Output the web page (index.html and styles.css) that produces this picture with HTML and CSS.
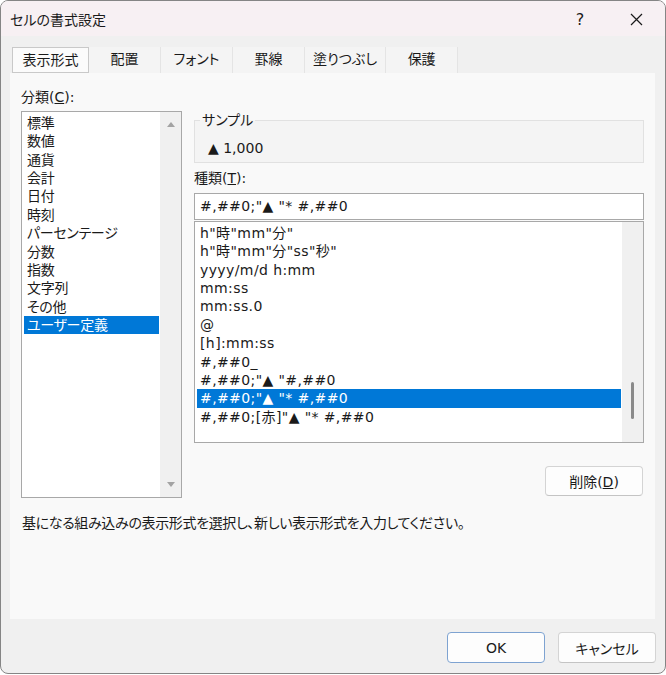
FILE: index.html
```html
<!DOCTYPE html>
<html lang="ja">
<head>
    <meta charset="UTF-8">
    <title>セルの書式設定</title>
    <link rel="stylesheet" href="styles.css">
</head>
<body>

<div class="dialog">
    <div class="titlebar">
        <span class="title">セルの書式設定</span>
        <span class="help">?</span>
        <span class="close">
            <svg width="13" height="13" viewBox="0 0 13 13"><path d="M1 1 L12 12 M12 1 L1 12" stroke="#1a1a1a" stroke-width="1.2" fill="none"/></svg>
        </span>
    </div>

    <div class="tabs">
        <div class="tab active">表示形式</div>
        <div class="tab">配置</div>
        <div class="tab">フォント</div>
        <div class="tab">罫線</div>
        <div class="tab">塗りつぶし</div>
        <div class="tab">保護</div>
    </div>

    <div class="panel">
        <div class="format-grid">
            <div class="label">分類(<u>C</u>):</div>

            <div class="listbox cat-list">
                <ul class="items">
                    <li>標準</li>
                    <li>数値</li>
                    <li>通貨</li>
                    <li>会計</li>
                    <li>日付</li>
                    <li>時刻</li>
                    <li>パーセンテージ</li>
                    <li>分数</li>
                    <li>指数</li>
                    <li>文字列</li>
                    <li>その他</li>
                    <li class="selected">ユーザー定義</li>
                </ul>
                <div class="vscroll arrows">
                    <svg width="8" height="5" viewBox="0 0 8 5"><polygon points="4,0 8,5 0,5" fill="#a3a3a3"/></svg>
                    <svg width="8" height="5" viewBox="0 0 8 5"><polygon points="0,0 8,0 4,5" fill="#a3a3a3"/></svg>
                </div>
            </div>

            <div class="right">
                <fieldset class="sample">
                    <legend>サンプル</legend>
                    <div class="sample-value">▲ 1,000</div>
                </fieldset>

                <div class="label type-label">種類(<u>T</u>):</div>
                <div class="textbox">#,##0;"▲ "* #,##0</div>

                <div class="listbox fmt-list">
                    <ul class="items">
                        <li>h"時"mm"分"</li>
                        <li>h"時"mm"分"ss"秒"</li>
                        <li>yyyy/m/d h:mm</li>
                        <li>mm:ss</li>
                        <li>mm:ss.0</li>
                        <li>@</li>
                        <li>[h]:mm:ss</li>
                        <li>#,##0_</li>
                        <li>#,##0;"▲ "#,##0</li>
                        <li class="selected">#,##0;"▲ "* #,##0</li>
                        <li>#,##0;[赤]"▲ "* #,##0</li>
                    </ul>
                    <div class="vscroll"><span class="thumb"></span></div>
                </div>

                <div class="actions">
                    <button class="btn small">削除(<u>D</u>)</button>
                </div>
            </div>
        </div>

        <p class="hint">基になる組み込みの表示形式を選択し、新しい表示形式を入力してください。</p>
    </div>

    <div class="footer">
        <button class="btn default">OK</button>
        <button class="btn">キャンセル</button>
    </div>
</div>

</body>
</html>
```

FILE: styles.css
```css
* { box-sizing: border-box; }
body { margin: 0; background: #fff; font-family: "DejaVu Sans", "Noto Sans CJK JP", sans-serif; font-size: 14px; color: #1a1a1a; font-feature-settings: "palt"; }

.dialog { width: 666px; height: 674px; border: 1px solid #858585; border-radius: 8px; background: #f0f0f0; display: flex; flex-direction: column; overflow: hidden; }

/* title bar */
.titlebar { height: 35px; flex: none; background: #f7f0f3; display: flex; align-items: center; padding: 2px 7px 0 9px; }
.title { line-height: 18px; }
.help { margin-left: auto; width: 44px; text-align: center; font-size: 16px; }
.close { width: 44px; margin-left: 12px; display: flex; justify-content: center; }

/* tabs */
.tabs { height: 37px; flex: none; display: flex; padding: 11px 0 0 11px; }
.tab { min-width: 72px; padding: 0 8px; height: 26px; line-height: 25px; text-align: center; background: #f4f4f4; border-right: 1px solid #e4e4e4; }
.tab.active { background: #fbfbfb; border: 1px solid #c9c9c9; min-width: 77px; }

/* panel */
.panel { height: 546px; flex: none; margin: 0 10px 0 9px; background: #f9f9f9; padding: 15px 11px 0 11px; }
.format-grid { display: grid; grid-template-columns: 161px 1fr; grid-template-rows: auto auto; column-gap: 12px; row-gap: 5px; }
.label { line-height: 18px; }
.cat-list { grid-column: 1; grid-row: 2; height: 387px; }
.right { grid-column: 2; grid-row: 2; }

.listbox { display: flex; background: #fff; border: 1px solid #a8a8a8; }
.items { flex: 1; list-style: none; margin: 0; padding: 2px 1px 0 2px; min-width: 0; }
.items li { line-height: 18.36px; padding-left: 3px; white-space: nowrap; }
.cat-list li { letter-spacing: -0.3px; }
.fmt-list li { letter-spacing: 0.4px; }
.items li.selected { background: #0078d7; color: #fff; }

.vscroll { width: 21px; background: #f0f0f0; flex: none; }
.vscroll.arrows { display: flex; flex-direction: column; justify-content: space-between; align-items: center; padding: 10px 0; }
.thumb { display: block; width: 3px; height: 37px; margin: 160px auto 0; background: #8a8a8a; border-radius: 2px; }

.sample { margin: 0; padding: 0 13px 5px 13px; border: 1px solid #e1e1e1; background: #f4f4f4; min-width: 0; }
.sample legend { padding: 0 2px; margin-left: -8px; line-height: 18px; }
.sample-value { line-height: 18px; margin-top: 10px; }

.type-label { margin-top: 6px; }
.textbox { margin-top: 6px; height: 27px; background: #fff; border: 1px solid #a8a8a8; padding-left: 5px; line-height: 25px; white-space: nowrap; letter-spacing: 0.4px; }
.fmt-list { margin-top: 1px; height: 222px; }

.actions { margin-top: 23px; text-align: right; padding-right: 1px; }

.hint { margin: 16px 0 0; padding-left: 1px; line-height: 18px; letter-spacing: -0.35px; }

/* buttons */
.btn { font: inherit; color: #1a1a1a; width: 98px; height: 31px; padding: 0; background: #fdfdfd; border: 1px solid #d4d4d4; border-bottom-color: #c4c4c4; border-radius: 4px; }
.btn.small { height: 30px; }
.btn.default { border-color: #7ea3d1; }

.footer { flex: 1; display: flex; justify-content: flex-end; gap: 13px; padding: 13px 9px 0 0; }
```
